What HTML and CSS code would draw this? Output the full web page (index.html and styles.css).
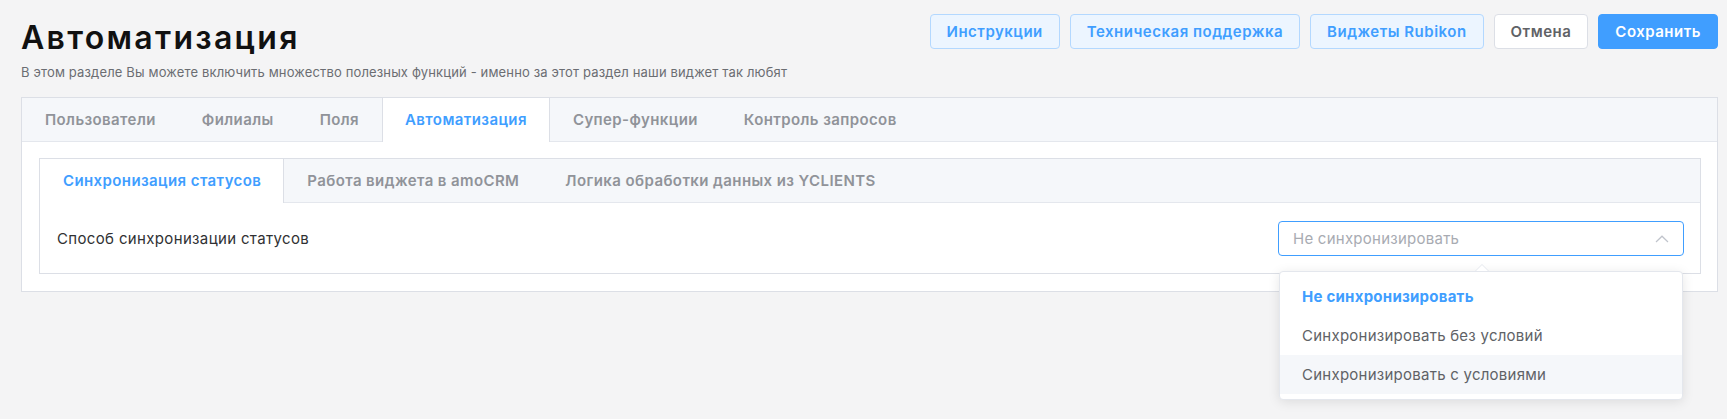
FILE: index.html
```html
<!DOCTYPE html>
<html lang="ru">
<head>
<meta charset="utf-8">
<title>Автоматизация</title>
<link rel="stylesheet" href="styles.css">
</head>
<body>
<div class="page">
  <header class="top">
    <h1 class="title">Автоматизация</h1>
    <div class="actions">
      <button class="btn btn-plain">Инструкции</button>
      <button class="btn btn-plain">Техническая поддержка</button>
      <button class="btn btn-plain">Виджеты Rubikon</button>
      <button class="btn btn-default">Отмена</button>
      <button class="btn btn-primary">Сохранить</button>
    </div>
  </header>
  <p class="subtitle">В этом разделе Вы можете включить множество полезных функций - именно за этот раздел наши виджет так любят</p>

  <section class="card">
    <nav class="card-head">
      <div class="tab">Пользователи</div>
      <div class="tab">Филиалы</div>
      <div class="tab">Поля</div>
      <div class="tab active">Автоматизация</div>
      <div class="tab">Супер-функции</div>
      <div class="tab">Контроль запросов</div>
    </nav>
    <div class="card-body">
      <section class="card">
        <nav class="card-head">
          <div class="tab active first">Синхронизация статусов</div>
          <div class="tab">Работа виджета в amoCRM</div>
          <div class="tab">Логика обработки данных из YCLIENTS</div>
        </nav>
        <div class="form-row">
          <div class="label">Способ синхронизации статусов</div>
          <div class="select">
            <div class="select-input">
              <span class="placeholder">Не синхронизировать</span>
              <svg class="chevron" width="14" height="8" viewBox="0 0 14 8"><path d="M1 7 L7 1.2 L13 7" fill="none" stroke="#c0c4cc" stroke-width="1.2"/></svg>
            </div>
            <div class="dropdown">
              <span class="arrow"></span>
              <ul class="options">
                <li class="option selected">Не синхронизировать</li>
                <li class="option">Синхронизировать без условий</li>
                <li class="option hover">Синхронизировать с условиями</li>
              </ul>
            </div>
          </div>
        </div>
      </section>
    </div>
  </section>
</div>
</body>
</html>
```

FILE: styles.css
```css
* { box-sizing: border-box; }
html, body { margin: 0; padding: 0; min-height: 100%; }
html { height: 100%; }
body {
  background: #f4f4f5;
  font-family: Inter, "Noto Sans", sans-serif;
  color: #303133;
}
.page {
  min-height: 419px;
  padding: 14px 9px 0 21px;
}
.top {
  display: flex;
  justify-content: space-between;
  align-items: flex-start;
}
.title {
  margin: 5px 0 0;
  font-size: 32px;
  line-height: 38px;
  font-weight: 600;
  color: #111;
  letter-spacing: 2.3px;
}
.actions {
  display: flex;
  gap: 10px;
}
.btn {
  height: 35px;
  padding: 0 16px;
  border-radius: 4px;
  border: 1px solid #dcdfe6;
  font-family: Inter, sans-serif;
  font-size: 15px;
  font-weight: 600;
  letter-spacing: 0.5px;
  background: #fff;
  color: #606266;
  cursor: pointer;
}
.btn-plain {
  background: #ecf5ff;
  border-color: #b3d8ff;
  color: #409eff;
}
.btn-primary {
  background: #409eff;
  border-color: #409eff;
  color: #fff;
}
.subtitle {
  margin: 7px 0 0;
  font-size: 13px;
  line-height: 16px;
  letter-spacing: 0.15px;
  color: #6b6d72;
}
.page > .card { margin-top: 17px; }
.card {
  background: #fff;
  border: 1px solid #dcdfe6;
}
.card-head {
  display: flex;
  height: 44px;
  background: #f5f7fa;
  border-bottom: 1px solid #e4e7ed;
}
.tab {
  height: 44px;
  line-height: 43px;
  padding: 0 22px;
  border-left: 1px solid transparent;
  border-right: 1px solid transparent;
  font-size: 15px;
  font-weight: 600;
  letter-spacing: 0.4px;
  color: #909399;
  white-space: nowrap;
}
.tab.active {
  background: #fff;
  color: #409eff;
  border-left-color: #dcdfe6;
  border-right-color: #dcdfe6;
}
.tab.first { border-left-color: transparent; }
.card-body {
  padding: 16px 16px 17px 17px;
}
.form-row {
  display: flex;
  align-items: center;
  justify-content: space-between;
  padding: 18px 16px 17px 17px;
}
.label {
  font-size: 15px;
  letter-spacing: 0.35px;
  color: #303133;
}
.select {
  position: relative;
  width: 406px;
}
.select-input {
  height: 35px;
  border: 1px solid #409eff;
  border-radius: 4px;
  display: flex;
  align-items: center;
  justify-content: space-between;
  padding: 0 14px 0 14px;
  background: #fff;
}
.placeholder {
  font-size: 15px;
  letter-spacing: 0.25px;
  color: #a8abb2;
}
.chevron { display: block; }
.dropdown {
  position: absolute;
  top: 50px;
  left: 1px;
  width: 404px;
  background: #fff;
  border: 1px solid #e4e7ed;
  border-radius: 4px;
  box-shadow: 0 2px 12px 0 rgba(0, 0, 0, 0.1);
  z-index: 10;
}
.arrow {
  position: absolute;
  top: -8px;
  left: 195px;
  width: 0;
  height: 0;
  border-left: 7px solid transparent;
  border-right: 7px solid transparent;
  border-bottom: 7px solid #e4e7ed;
}
.arrow::after {
  content: "";
  position: absolute;
  top: 1px;
  left: -6px;
  border-left: 6px solid transparent;
  border-right: 6px solid transparent;
  border-bottom: 6px solid #fff;
}
.options {
  list-style: none;
  margin: 0;
  padding: 5px 0;
}
.option {
  height: 39px;
  line-height: 39px;
  padding: 0 22px;
  font-size: 15px;
  letter-spacing: 0.25px;
  color: #606266;
  white-space: nowrap;
}
.option.selected {
  color: #409eff;
  font-weight: 700;
}
.option.hover { background: #f5f7fa; }
```
